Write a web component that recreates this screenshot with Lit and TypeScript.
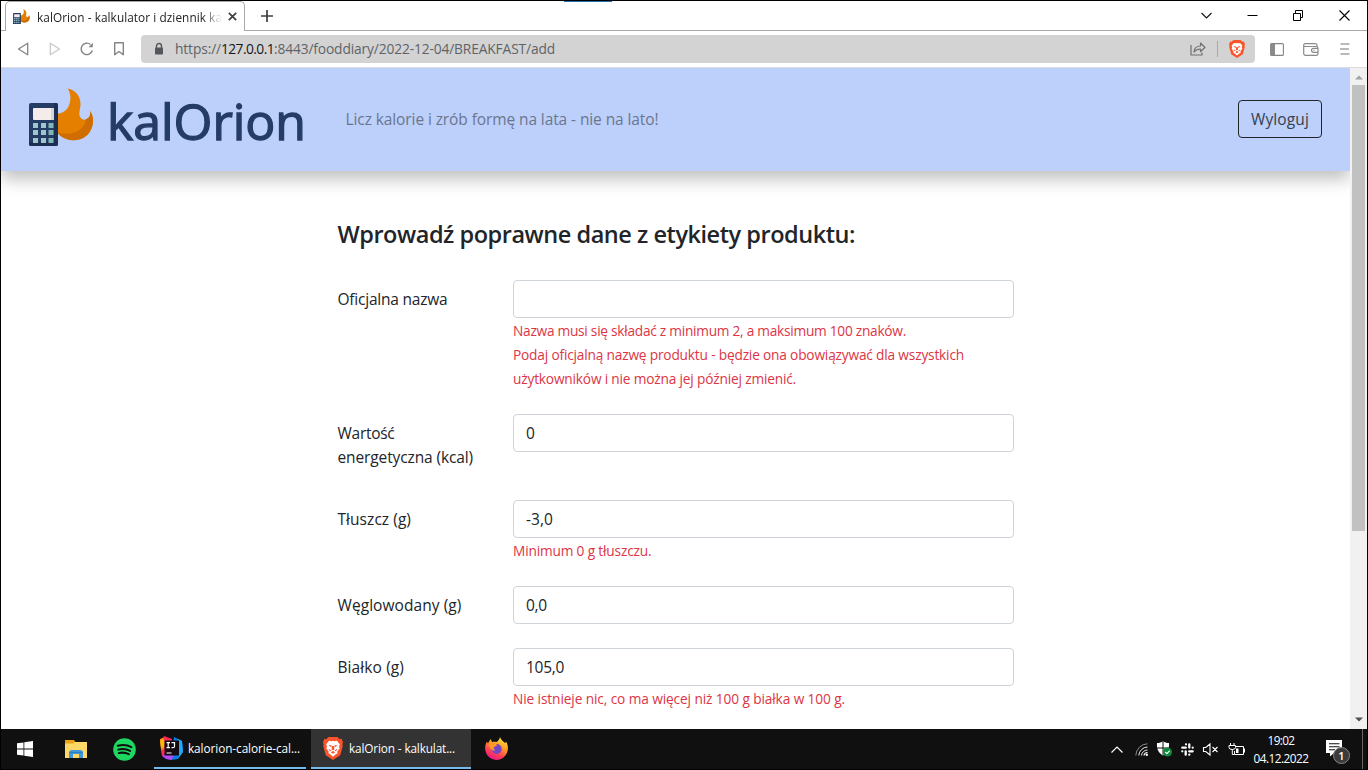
import { LitElement, html, css, svg, nothing } from "lit";
import { customElement, property } from "lit/decorators.js";

/** A run of text whose tracking is adjusted so that it takes a given width. */
@customElement("fit-text")
class FitText extends LitElement {
  @property({ type: Number }) w = 0;
  static styles = css`
    :host { display: inline-block; white-space: nowrap; }
    .run { display: inline-block; white-space: nowrap; }
  `;
  firstUpdated() {
    const run = this.renderRoot.querySelector(".run") as HTMLElement;
    const count = (this.textContent ?? "").length;
    if (this.w && count) {
      const natural = run.getBoundingClientRect().width;
      run.style.letterSpacing = `${(this.w - natural) / count}px`;
    }
  }
  render() {
    return html`<span class="run"><slot></slot></span>`;
  }
}

const logo = svg`
  <path fill="#e57f00" d="M38.500 .5C47 2 52 9 51.500 17c-.4 5-2 8-.6 11.500 1.300 3.500 5.500 4.500 8.600 1.200 1.900-2 2.400-4 1.700-6.700 5.500 8 2.600 21.500-6.200 26.600-9 5.200-21.500 2.400-27.500-5.600V25.500c5 .3 10-2.500 12.200-7.500C42 12.500 42.500 6 38.500 .5z"/>
  <path fill="#cf6d00" d="M28.500 44.200c10 3.500 22 1.200 26.700-7.200 1.200-2.200 1.400-4 1.300-5.700 3.200-.8 5.300-3.300 4.700-8.300 5.500 8 2.600 21.500-6.200 26.600-9 5.200-21.500 2.400-26.500-5.400z"/>
  <rect x="0" y="15" width="29" height="43" rx="2" fill="#243b63"/>
  <path fill="#1c2f52" d="M25 15h2a2 2 0 0 1 2 2v39a2 2 0 0 1-2 2H2a2 2 0 0 1-2-2v-2h25z"/>
  <rect x="4" y="20" width="21" height="12" rx="1" fill="#f4ecea"/>
  <path fill="#d9d3d8" d="M22 20h2a1 1 0 0 1 1 1v10a1 1 0 0 1-1 1h-2z"/>
  <path fill="#9fc5cf" d="M4 35h5v5H4zM12 35h5v5h-5zM4 42h5v5H4zM12 42h5v5h-5zM4 50h5v5H4zM12 50h5v5h-5z"/>
  <path fill="#7fb5b5" d="M19.500 35h5v5h-5zM19.500 42h5v5h-5zM19.500 50h5v5h-5z"/>`;

const lion = svg`
  <path fill="#fb542b" d="M5 0h8l2 2 1.700-.3L18 5l-.6 2 .4 1.500-2.300 8.500L9 21.500 2.500 17 .2 8.500.6 7 0 5l1.300-3.300L3 2z"/>
  <path fill="#fff" d="M5.500 3.600 7.500 4 9 3.500l1.500.5 2-.4 2.600 3.200-.7 2.200.6 1.500-2.200 3.300.4 1.500-2 1L9 18.500l-2.200-2.200-2-1 .4-1.500L3 10.500 3.600 9l-.7-2.200z"/>
  <path fill="#fb542b" d="m4.800 7.200 3 .7-.3 2zM13.200 7.200l-3 .7.300 2zM8.200 8.500h1.600l.5 3.200L9 12.500l-1.300-.8zM5 11l2.500 1.500L6.300 13.500zM13 11l-2.500 1.500 1.200 1zM7 14.200l2-1 2 1-2 1.500z"/>`;

interface Field { label: string[]; labelW: number[]; value?: string; valueW?: number; errors?: [string, number][]; }

const FIELDS: Field[] = [
  { label: ["Oficjalna nazwa"], labelW: [110], errors: [
    ["Nazwa musi się składać z minimum 2, a maksimum 100 znaków.", 393],
    ["Podaj oficjalną nazwę produktu - będzie ona obowiązywać dla wszystkich", 451],
    ["użytkowników i nie można jej później zmienić.", 283]] },
  { label: ["Wartość", "energetyczna (kcal)"], labelW: [57, 135.500], value: "0", valueW: 9 },
  { label: ["Tłuszcz (g)"], labelW: [73.500], value: "-3,0", valueW: 27,
    errors: [["Minimum 0 g tłuszczu.", 138.500]] },
  { label: ["Węglowodany (g)"], labelW: [124], value: "0,0", valueW: 21 },
  { label: ["Białko (g)"], labelW: [66.500], value: "105,0", valueW: 38,
    errors: [["Nie istnieje nic, co ma więcej niż 100 g białka w 100 g.", 332]] },
];

@customElement("app-root")
class AppRoot extends LitElement {
  static styles = css`
    :host { display: block; font-family: "Open Sans", "Noto Sans", sans-serif; color: #212529; }
    * { box-sizing: border-box; }
    svg { display: block; flex: none; overflow: visible; }
    .screen { width: 1368px; height: 770px; border: 1px solid #000; background: #fff; display: flex; flex-direction: column; overflow: hidden; }

    .tabs { position: relative; height: 30px; flex: none; display: flex; border-bottom: 1px solid #a9a9a9; }
    .sliver { position: absolute; left: 563px; top: -1px; width: 48px; height: 2px; background: #000; border-bottom: 1px solid #1f6fb5; }
    .tab { margin: 0 0 0 4px; width: 240px; height: 30px; flex: none; border: 1px solid #a9a9a9; border-bottom: 0; border-radius: 5px 5px 0 0; background: #fff; display: flex; align-items: center; padding: 0 6px 0 7px; }
    .tab-title { margin-left: 7px; width: 185px; flex: none; overflow: hidden; font-size: 11.800px; line-height: 20px; color: #202124; -webkit-mask-image: linear-gradient(90deg, #000 165px, transparent 185px); mask-image: linear-gradient(90deg, #000 165px, transparent 185px); }
    .tab-close { margin: 0 0 0 6px; }
    .new-tab { margin: 9px 0 0 16px; }
    .window-buttons { margin-left: auto; padding: 9px 17px 0 0; display: flex; gap: 35px; }

    .toolbar { height: 37px; flex: none; display: flex; align-items: center; border-bottom: 1px solid #dcdcdc; }
    .nav { width: 140px; flex: none; display: flex; padding-left: 16px; gap: 20px; }
    .reload { margin-left: -1px; }
    .url { width: 1114px; height: 28px; flex: none; background: #d3d3d3; border-radius: 4px; display: flex; align-items: center; padding: 0 10px 0 13px; }
    .address { margin-left: 11px; font-size: 13.800px; line-height: 20px; color: #5f6368; }
    .host { color: #17181a; }
    .share { margin-left: auto; }
    .divider { width: 1px; height: 16px; background: #a8a8a8; margin: 0 11px; }
    .tools { display: flex; margin-left: 15px; align-items: center; }
    .wallet { margin-left: 19px; }
    .menu { margin-left: 21px; }

    .viewport { height: 661px; flex: none; display: flex; }
    .page { width: 1349px; height: 661px; overflow: hidden; }
    .header { height: 103px; background: #bcd0fb; box-shadow: 0 8px 16px rgba(0, 0, 0, .25); display: flex; padding: 0 28px 0 28px; }
    .logo { margin-top: 20px; }
    .brand { margin: 18px 0 0 13px; width: 203px; font-size: 50px; line-height: 70px; color: #253d66; -webkit-text-stroke: 1.300px #253d66; }
    .motto { margin: 39px 0 0 35.500px; font-size: 15.500px; line-height: 24px; color: #6b768e; }
    .logout { margin: 32px 0 0 auto; width: 84px; height: 38px; border: 1px solid #212529; border-radius: 4px; background: none; padding: 0; font: 400 15.500px/24px "Open Sans", sans-serif; color: #35404f; }

    .form { width: 677px; margin: 48px 0 0 336px; }
    .title { margin: 0 0 30px; font-size: 23.500px; line-height: 31px; font-weight: 600; color: #212529; height: 31px; padding-left: .5px; }
    .field { display: grid; grid-template-columns: 176px 501px; margin-bottom: 24px; }
    .label { padding: 7px 0 7px .5px; font-size: 15.500px; line-height: 24px; }
    .line { display: block; height: 24px; }
    .input { height: 38px; border: 1px solid #ced4da; border-radius: 4px; padding: 6px 12px; font-size: 15.500px; line-height: 24px; background: #fff; }
    .error { height: 24px; line-height: 26px; font-size: 13.700px; color: #dc3545; }

    .scroll { width: 17px; background: #f1f1f1; display: flex; flex-direction: column; align-items: center; }
    .thumb { width: 13px; height: 446px; margin-top: 5px; background: #c1c1c1; }
    .arrow-up { margin-top: 7px; }
    .arrow-down { margin: auto 0 7px; }

    .taskbar { height: 40px; flex: none; background: #101010; display: flex; color: #fff; font-size: 11.800px; }
    .pinned { width: 153px; display: flex; align-items: center; padding-left: 16px; }
    .explorer { margin-left: 32px; }
    .spotify { margin-left: 26px; }
    .task { display: flex; align-items: center; height: 40px; border-bottom: 2px solid #76b9ed; flex: none; }
    .ide { width: 152px; padding-left: 6px; gap: 5px; }
    .browser { width: 160px; margin-left: 5px; background: #333; padding-left: 12px; gap: 6px; }
    .fox { margin: 8px 0 0 14px; }
    .tray { margin-left: auto; display: flex; align-items: center; }
    .wifi { margin-left: 12px; }
    .clock { width: 66px; margin-left: 3px; text-align: center; line-height: 18px; height: 37px; }
    .notes { margin: 6px 0 0 12px; }
    .peek { width: 1px; height: 40px; background: #666; margin: 0 4px 0 11px; }
  `;

  private tabStrip() {
    return html`<div class="tabs">
      <div class="sliver"></div>
      <div class="tab">
        <svg width="17" height="15" viewBox="0 0 65 58">${logo}</svg>
        <div class="tab-title"><fit-text w="185">kalOrion - kalkulator i dziennik ka</fit-text></div>
        <svg class="tab-close" width="9" height="9" viewBox="0 0 9 9"><path d="M.8.8l7.400 7.400M8.200.8.800 8.200" stroke="#3c4043" stroke-width="1.700"/></svg>
      </div>
      <svg class="new-tab" width="12" height="12" viewBox="0 0 12 12"><path d="M6 0v12M0 6h12" stroke="#3c4043" stroke-width="1.700"/></svg>
      <div class="window-buttons">
        <svg width="11" height="11" viewBox="0 0 11 11"><path d="M.5 3l5 5 5-5" fill="none" stroke="#111" stroke-width="1.100"/></svg>
        <svg width="11" height="11" viewBox="0 0 11 11"><path d="M.5 5.500h10" stroke="#000"/></svg>
        <svg width="11" height="11" viewBox="0 0 11 11"><path d="M.5 3.500h7v7h-7zM2.500 3V.5h7v7H8" fill="none" stroke="#000"/></svg>
        <svg width="11" height="11" viewBox="0 0 11 11"><path d="M.5.5l10 10M10.500.5l-10 10" stroke="#000" stroke-width="1.100"/></svg>
      </div>
    </div>`;
  }

  private toolbar() {
    return html`<div class="toolbar">
      <div class="nav">
        <svg width="12" height="14" viewBox="0 0 12 14"><path d="M10.700 1.200v11.600L1.500 7z" fill="none" stroke="#858585" stroke-width="1.300" stroke-linejoin="round"/></svg>
        <svg width="12" height="14" viewBox="0 0 12 14"><path d="M1.300 1.200v11.600L10.500 7z" fill="none" stroke="#c9c9c9" stroke-width="1.300" stroke-linejoin="round"/></svg>
        <svg class="reload" width="14" height="14" viewBox="0 0 14 14"><path d="M12.300 8.500A5.700 5.700 0 1 1 10.500 2.500" fill="none" stroke="#858585" stroke-width="1.400"/><path d="M12.800.8v4.400H8.500" fill="#858585"/></svg>
        <svg width="10" height="14" viewBox="0 0 10 14"><path d="M.7.800h8.600v12L5 9.500.700 12.800z" fill="none" stroke="#858585" stroke-width="1.400" stroke-linejoin="round"/></svg>
      </div>
      <div class="url">
        <svg width="10" height="12" viewBox="0 0 10 12"><path d="M2.500 5V3a2.500 2.500 0 0 1 5 0v2" fill="none" stroke="#54585d" stroke-width="1.400"/><rect x="1" y="4.500" width="8" height="7" rx=".8" fill="#54585d"/></svg>
        <div class="address"><fit-text w="46">https://</fit-text><fit-text class="host" w="53">127.0.0.1</fit-text><fit-text w="281">:8443/fooddiary/2022-12-04/BREAKFAST/add</fit-text></div>
        <svg class="share" width="16" height="14" viewBox="0 0 16 14"><path d="M1 3v10h11v-2.500M4 10c.3-4 2.500-6 6.500-6V1l4.500 4.500L10.500 9.500V7C7.500 7 5.500 8 4 10z" fill="none" stroke="#707070" stroke-width="1.200" stroke-linejoin="round"/></svg>
        <div class="divider"></div>
        <svg width="16" height="18" viewBox="0 0 18 21.500" preserveAspectRatio="none">${lion}</svg>
      </div>
      <div class="tools">
        <svg width="14" height="13" viewBox="0 0 14 13"><rect x=".6" y=".6" width="12.800" height="11.800" rx="1" fill="none" stroke="#858585" stroke-width="1.100"/><path d="M1 1h4v11H1z" fill="#8b8b8b"/></svg>
        <svg class="wallet" width="16" height="13" viewBox="0 0 16 13"><path d="M14 3.500V2.200a1.500 1.500 0 0 0-1.500-1.500H2.200A1.500 1.500 0 0 0 .7 2.200v8.300A1.800 1.800 0 0 0 2.500 12.300H13.500a1.500 1.500 0 0 0 1.500-1.500V5.200A1.700 1.700 0 0 0 13.500 3.500H1M15 9.300h-4.500a2 2 0 0 1 0-4H15M10.500 7.300h1" fill="none" stroke="#8a8a8a" stroke-width="1.200"/></svg>
        <svg class="menu" width="10" height="12" viewBox="0 0 10 12"><path d="M.5 1h9M0 6h9M.500 11h9" stroke="#777" stroke-width="1.200"/></svg>
      </div>
    </div>`;
  }

  private field(f: Field) {
    return html`<div class="field">
      <div class="label">${f.label.map((t, i) => html`<span class="line"><fit-text w=${f.labelW[i]}>${t}</fit-text></span>`)}</div>
      <div>
        <div class="input">${f.value ? html`<fit-text w=${f.valueW!}>${f.value}</fit-text>` : nothing}</div>
        ${(f.errors ?? []).map(([t, w]) => html`<div class="error"><fit-text w=${w}>${t}</fit-text></div>`)}
      </div>
    </div>`;
  }

  private page() {
    return html`<div class="viewport">
      <div class="page">
        <div class="header">
          <svg class="logo" width="65" height="58" viewBox="0 0 65 58">${logo}</svg>
          <div class="brand"><fit-text w="199">kalOrion</fit-text></div>
          <div class="motto"><fit-text w="313">Licz kalorie i zrób formę na lata - nie na lato!</fit-text></div>
          <button class="logout"><fit-text w="58">Wyloguj</fit-text></button>
        </div>
        <div class="form">
          <h4 class="title"><fit-text w="517.500">Wprowadź poprawne dane z etykiety produktu:</fit-text></h4>
          ${FIELDS.map((f) => this.field(f))}
        </div>
      </div>
      <div class="scroll">
        <svg class="arrow-up" width="8" height="5" viewBox="0 0 8 5"><path d="M0 4.500h8L4 .500z" fill="#a3a3a3"/></svg>
        <div class="thumb"></div>
        <svg class="arrow-down" width="8" height="5" viewBox="0 0 8 5"><path d="M0 .5h8l-4 4z" fill="#505050"/></svg>
      </div>
    </div>`;
  }

  private taskbar() {
    return html`<div class="taskbar">
      <div class="pinned">
        <svg width="16" height="16" viewBox="0 0 16 16"><path fill="#fff" d="M0 2.300 6.500 1.400v6.200H0zM7.300 1.200 16 0v7.600H7.300zM0 8.400h6.500v6.200L0 13.700zM7.300 8.400H16V16l-8.700-1.200z"/></svg>
        <svg class="explorer" width="22" height="18" viewBox="0 0 22 18"><path fill="#e8a317" d="M0 0h9l1.500 2H22v4H0z"/><path fill="#ffd868" d="M0 3.500h8L10 2h12v16H0z"/><path fill="#3f97d8" d="M4 18v-6.500L6 10h10l2 1.500V18h-4v-4H8v4z"/><path fill="#2b7fc4" d="M4 12h14v1H4z"/></svg>
        <svg class="spotify" width="23" height="23" viewBox="0 0 23 23"><circle cx="11.500" cy="11.500" r="11.300" fill="#1ed760"/><path d="M4.700 7.800c4.800-1.300 9.600-.9 13.700 1.300M5.200 11.600c4.300-1.200 8.300-.7 11.900 1.300M5.700 15.100c3.700-.9 7.100-.5 10.100 1.100" fill="none" stroke="#101010" stroke-width="2" stroke-linecap="round"/></svg>
      </div>
      <div class="task ide">
        <svg width="23" height="24" viewBox="0 0 23 24"><path fill="#fc801d" d="M0 3 5 1l6 5-7 12-3-4z"/><path fill="#fe2857" d="M4 0 12 3l-1 11-9 6-1-5 4-3L1 7z"/><path fill="#fdb60d" d="M0 5l3-3 2 4-1 5-3 1z"/><path fill="#007ee5" d="M14 1l8 4 1 11-5 7-7 1-5-4 6-6z"/><path fill="#21a9f5" d="m18 3 4 2 1 11-4 5-3-12z"/><path fill="#b74af7" d="m2 20 5-4 7 4-3 4-5-1z"/><rect x="4.500" y="4.500" width="14.500" height="15" fill="#160a12"/><path d="M6.500 6.700h3.500M8.200 6.700v5M6.500 11.700H10M11.500 6.700h3v3.500q0 1.500-1.500 1.500h-1.500M6.500 17h5" fill="none" stroke="#fff" stroke-width="1.200"/></svg>
        <fit-text w="112">kalorion-calorie-cal...</fit-text>
      </div>
      <div class="task browser">
        <svg width="20" height="23" viewBox="0 0 18 21.500" preserveAspectRatio="none">${lion}</svg>
        <fit-text w="106">kalOrion - kalkulat...</fit-text>
      </div>
      <svg class="fox" width="23" height="23" viewBox="0 0 23 23">
        <defs><linearGradient id="fx" x1=".8" y1="0" x2=".3" y2="1"><stop offset="0" stop-color="#fff03f"/><stop offset=".4" stop-color="#ff9a25"/><stop offset=".7" stop-color="#ff4152"/><stop offset="1" stop-color="#e31587"/></linearGradient></defs>
        <path fill="url(#fx)" d="M15 0c1 3 3 4 5 6 1-.2.800-1 .8-1.800C24 9 23.500 15 20 19c-4 4.700-11 5.200-15.500 1.500C-.5 16.500-1 9 2 4.500c.3 1 .6 1.500 1 2C4 5 4.500 3 6 2c0 1.500.5 2.500 1.500 3 1.500-.4 2.500-.4 4 0C13 4 14.500 2.500 15 0z"/>
        <circle cx="11.700" cy="12" r="5" fill="#7445c7"/><path fill="#ff9a25" d="M4 7c3-1.500 6-1.200 8 1 0 1.200-2 1.300-3 2-.8 1 .2 2.500 1.500 3.500C7 14 4 11 4 7z"/></svg>
      <div class="tray">
        <svg width="12" height="7" viewBox="0 0 12 7"><path d="M.5 6.500l5.500-5.500 5.500 5.500" fill="none" stroke="#fff" stroke-width="1.200"/></svg>
        <svg class="wifi" width="13" height="13" viewBox="0 0 13 13"><path d="M.8 12.500A12 12 0 0 1 12.500.8" fill="none" stroke="#8a8a8a"/><path d="M3.800 12.500A9 9 0 0 1 12.500 4M6.500 12.500A6 6 0 0 1 12.500 7" fill="none" stroke="#eee"/><path d="M9 12.500A3.500 3.500 0 0 1 12.500 9.500" fill="none" stroke="#fff" stroke-width="1.200"/><circle cx="11.800" cy="11.800" r="1.200" fill="#fff"/></svg>
        <svg width="33" height="16" viewBox="0 0 33 16"><path fill="#fff" d="M9 2c2.500 0 4.500-.5 6-2 1.500 1.500 3.500 2 6 2 .5 6-1.500 10-6 12.500C10.500 12 8.500 8 9 2z"/><path d="M15 0v14M9 7h12" stroke="#101010"/><circle cx="19.500" cy="11" r="4.500" fill="#10893e"/><path d="m17.300 11 1.600 1.600 2.800-3" fill="none" stroke="#fff" stroke-width="1.100"/></svg>
        <svg width="13" height="13" viewBox="0 0 13 13"><path d="M5 1.300v0M8.300 1.300v3.200M1.300 4.700h3.500M11.700 4.700v0M1.300 8.300v0M8.200 8.300h3.500M4.700 8.300v3.400M8.300 11.700v0" fill="none" stroke="#fff" stroke-width="2.300" stroke-linecap="round"/></svg>
        <svg width="35" height="13" viewBox="0 0 35 13"><path d="M9.500 4.500h2.300L16 1v11l-4.200-3.500H9.500zM18.500 4l5 5M23.500 4l-5 5" fill="none" stroke="#fff" stroke-width="1.100"/></svg>
        <svg width="16" height="13" viewBox="0 0 16 13"><path d="M7 3.500h7.500v8h-9V8M15.500 5.500v4M1.500 0v2.500M5 0v2.500M0 2.500h6.500v2q0 2-3.200 2T0 4.500zM3.300 6.500v5h2" fill="none" stroke="#fff"/><path fill="#fff" d="M7 5.500h2.500v4.500H7z"/></svg>
        <div class="clock"><fit-text w="27">19:02</fit-text><br><fit-text w="55">04.12.2022</fit-text></div>
        <svg class="notes" width="25" height="24" viewBox="0 0 25 24"><path fill="#fff" d="M0 0h16v13H8l-4 3.500V13H0z"/><path d="M3 3.700h10.500M3 6.700h10.500M3 9.700h6" stroke="#101010" stroke-width="1.100"/><circle cx="15.500" cy="15.500" r="8" fill="#3b3b3b" stroke="#858585"/><text x="15.500" y="19.500" text-anchor="middle" font-size="11" font-weight="600" fill="#fff">1</text></svg>
        <div class="peek"></div>
      </div>
    </div>`;
  }

  render() {
    return html`<div class="screen">${this.tabStrip()}${this.toolbar()}${this.page()}${this.taskbar()}</div>`;
  }
}
